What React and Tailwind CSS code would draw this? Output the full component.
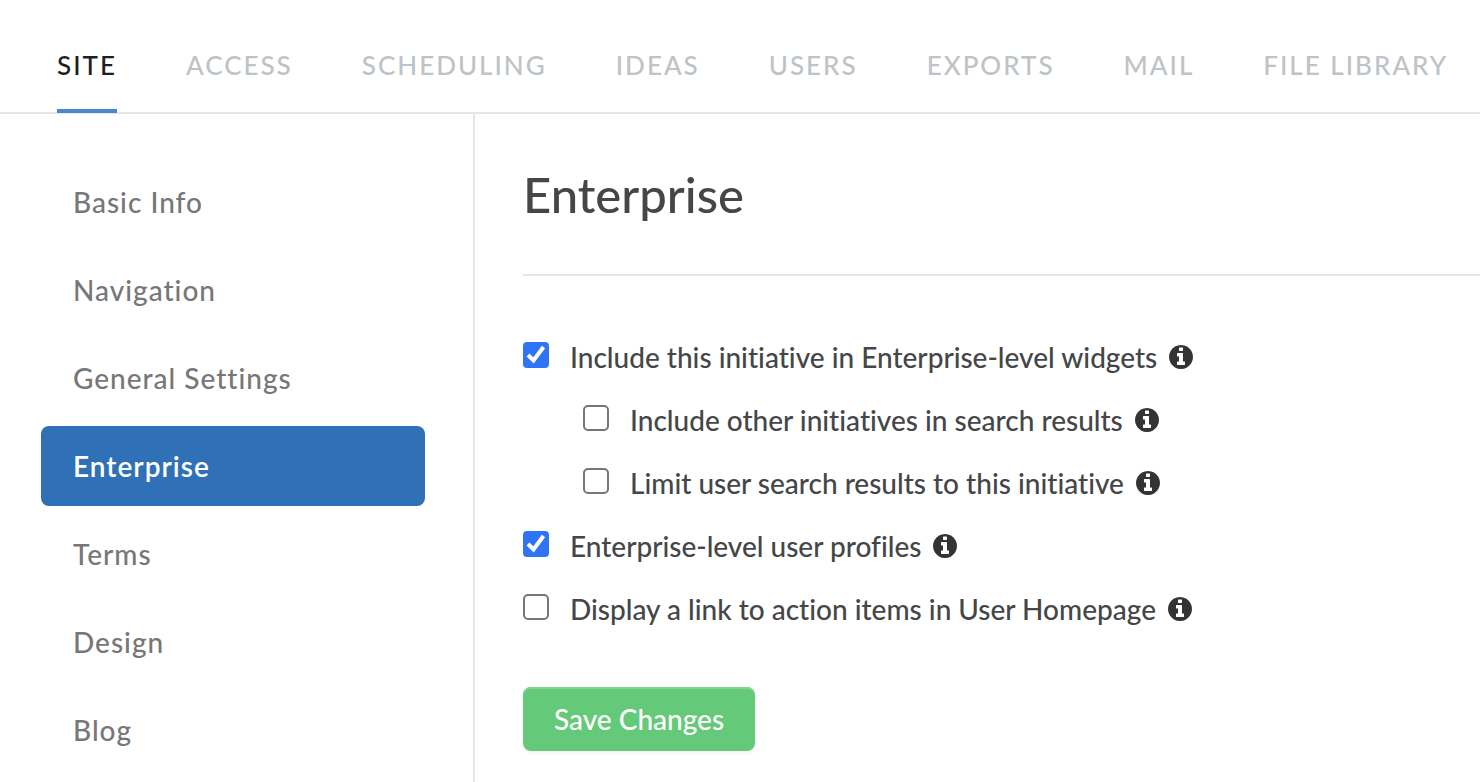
import { useState } from 'react';

const tabs = ['Site', 'Access', 'Scheduling', 'Ideas', 'Users', 'Exports', 'Mail', 'File Library'];

const sections = ['Basic Info', 'Navigation', 'General Settings', 'Enterprise', 'Terms', 'Design', 'Blog'];

const options = [
  { id: 'widgets', label: 'Include this initiative in Enterprise-level widgets', checked: true },
  { id: 'other-initiatives', label: 'Include other initiatives in search results', nested: true },
  { id: 'limit-search', label: 'Limit user search results to this initiative', nested: true },
  { id: 'profiles', label: 'Enterprise-level user profiles', checked: true },
  { id: 'action-items', label: 'Display a link to action items in User Homepage' }
];

const InfoIcon = () => (
  <svg className="w-6 h-6" viewBox="0 0 1536 1536" fill="currentColor">
    <path d="M1024 1248v-160q0-14-9-23t-23-9h-96v-512q0-14-9-23t-23-9h-320q-14 0-23 9t-9 23v160q0 14 9 23t23 9h96v320h-96q-14 0-23 9t-9 23v160q0 14 9 23t23 9h448q14 0 23-9t9-23zM896 352v-160q0-14-9-23t-23-9h-192q-14 0-23 9t-9 23v160q0 14 9 23t23 9h192q14 0 23-9t9-23zM1536 768q0 209-103 385.500t-279.500 279.500-385.500 103-385.500-103-279.500-279.500-103-385.500 103-385.500 279.500-279.500 385.500-103 385.500 103 279.500 279.500 103 385.500z" />
  </svg>
);

const Option = ({ option }) => {
  const [checked, setChecked] = useState(!!option.checked);

  return (
    <div className={`flex items-center h-[63px] ${option.nested ? 'pl-[60px]' : ''}`}>
      <span className="relative -mt-1 w-[26px] h-[26px] shrink-0">
        <input
          id={option.id}
          type="checkbox"
          checked={checked}
          onChange={e => setChecked(e.target.checked)}
          className="peer block appearance-none w-[26px] h-[26px] rounded-[5px] border-2 border-[#767676] bg-white checked:rounded-sm checked:bg-[#3074f6] checked:border-[#3074f6]"
        />
        <svg
          className="absolute inset-0 hidden peer-checked:block pointer-events-none"
          viewBox="0 0 26 26"
          fill="none"
          stroke="white"
          strokeWidth="4"
        >
          <path d="M5 13l5.500 5.500L20.500 5" />
        </svg>
      </span>
      <label htmlFor={option.id} className="ml-[21px] whitespace-nowrap">{option.label}</label>
      <button type="button" aria-label="More information" className="ml-3 text-[#333333]">
        <InfoIcon />
      </button>
    </div>
  );
};

const App = () => {
  return (
    <div className="min-h-screen flex flex-col bg-white text-[#444648] font-['Lato',sans-serif] font-medium [font-variant-ligatures:none]">
      <nav className="flex gap-[69px] px-[57px] border-b-2 border-[#e6e6e6] text-[26px] leading-8 tracking-[2px] uppercase">
        {tabs.map((tab, i) => (
          <a
            key={tab}
            href="#"
            className={`pt-[49px] pb-7 -mb-px whitespace-nowrap border-b-4 ${
              i === 0 ? 'text-[#1e1e1e] border-[#4a88c9]' : 'text-[#bdc3c7] border-transparent'
            }`}
          >
            {tab}
          </a>
        ))}
      </nav>

      <div className="flex flex-1">
        <aside className="w-[475px] shrink-0 border-r-2 border-[#e6e6e6] pt-12 pl-[41px] pr-12">
          <ul className="flex flex-col gap-2">
            {sections.map(section => (
              <li key={section}>
                <a
                  href="#"
                  className={`flex items-center h-20 px-8 rounded-lg text-[28px] tracking-[1px] ${
                    section === 'Enterprise' ? 'bg-[#3070b7] text-white font-semibold' : 'text-[#777777]'
                  }`}
                >
                  {section}
                </a>
              </li>
            ))}
          </ul>
        </aside>

        <main className="flex-1 pl-12">
          <h1 className="py-[50px] text-[49px] leading-[60px] border-b-2 border-[#e6e6e6]">Enterprise</h1>
          <form className="pt-[49px] text-[28px]" onSubmit={e => e.preventDefault()}>
            {options.map(option => (
              <Option key={option.id} option={option} />
            ))}
            <button
              type="submit"
              className="mt-[47px] h-16 px-[31px] rounded-lg bg-[#65c97a] text-white shadow-[inset_0_2px_0_#84d395,0_2px_4px_rgba(0,0,0,0.06)]"
            >
              Save Changes
            </button>
          </form>
        </main>
      </div>
    </div>
  );
};

export default App;
